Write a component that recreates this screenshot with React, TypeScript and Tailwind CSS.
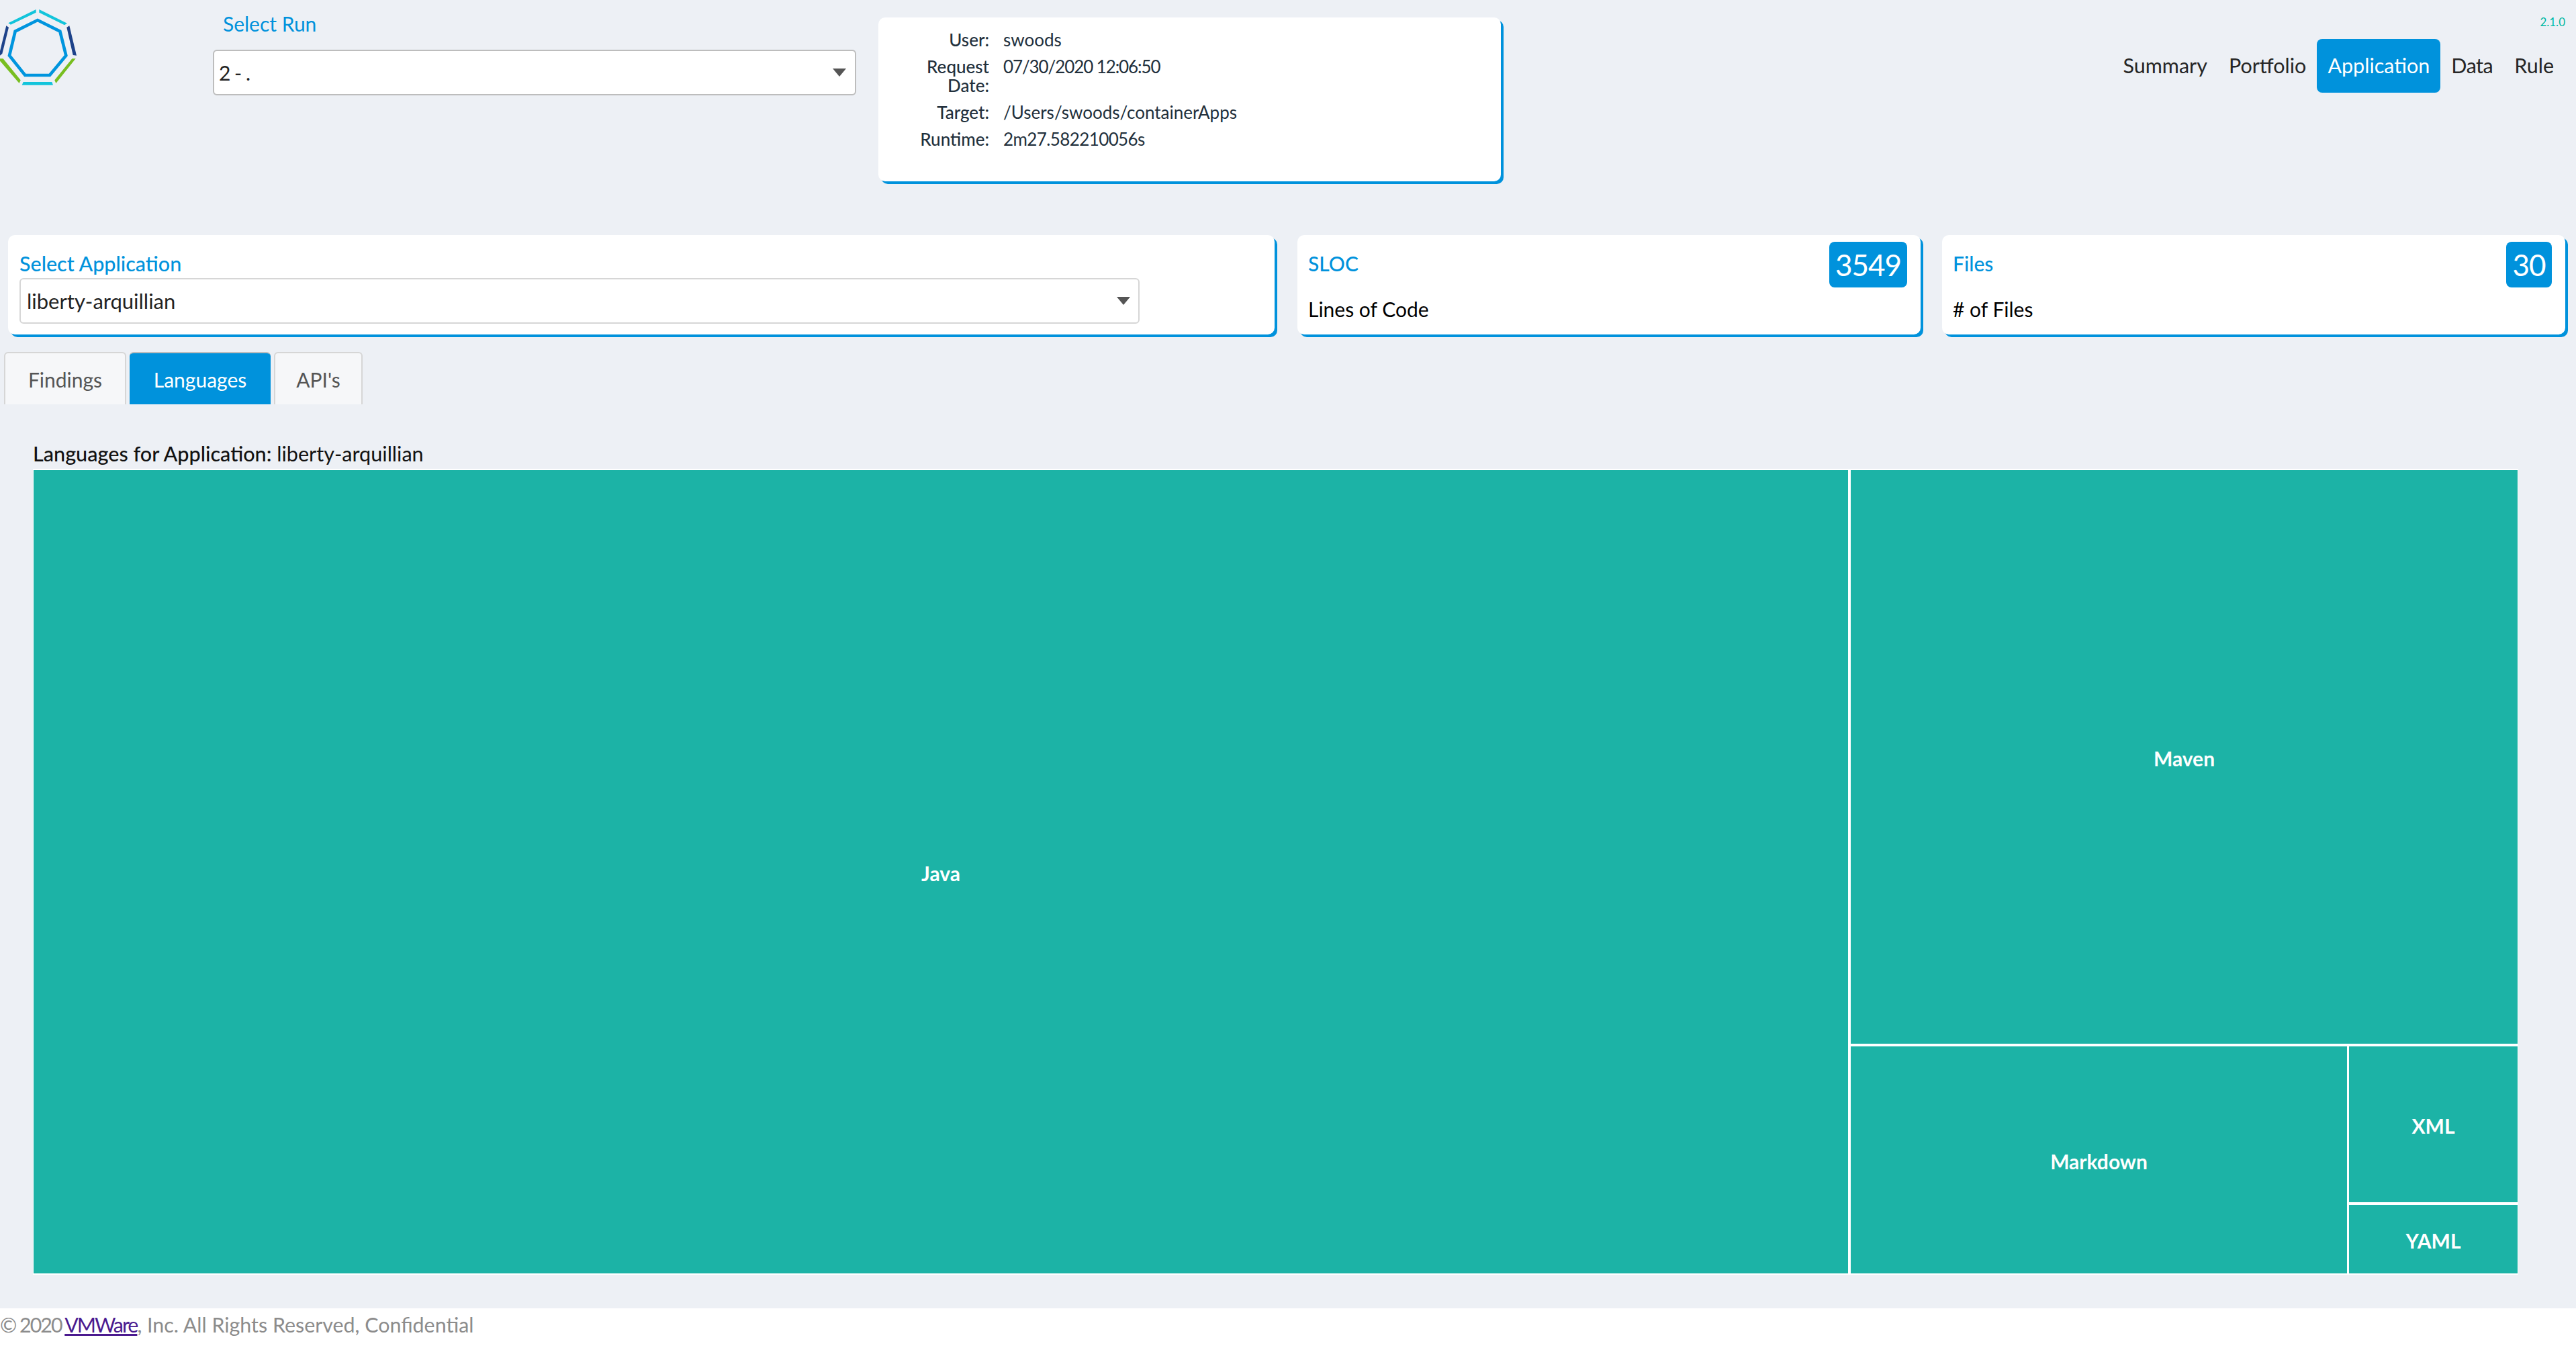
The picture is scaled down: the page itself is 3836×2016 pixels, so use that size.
const FONT = "font-['Lato','Noto_Sans',sans-serif]";

function Logo() {
  return (
    <svg viewBox="0 0 420 420" className="h-[140px] w-[140px] shrink-0">
      <polygon
        points="168,90 268,140 295,248 222,336 112,336 42,248 68,140"
        fill="none"
        stroke="#0095de"
        strokeWidth="14"
      />
      <polygon points="161,42 161,56 48,110 37,103" fill="#13c4db" />
      <polygon points="175,42 175,56 288,112 300,104" fill="#13c4db" />
      <polygon points="310,115 298,122 326,246 342,248" fill="#1d428a" />
      <polygon points="28,115 39,122 10,240 0,248 0,228" fill="#1d428a" />
      <polygon points="322,262 338,262 250,372 244,358" fill="#78be20" />
      <polygon points="0,262 14,262 92,358 86,372 0,272" fill="#78be20" />
      <polygon points="104,366 232,366 237,380 98,380" fill="#13c4db" />
    </svg>
  );
}

function Caret() {
  return (
    <svg viewBox="0 0 20 12" className="h-[12px] w-[20px]">
      <polygon points="0,0 20,0 10,12" fill="#555555" />
    </svg>
  );
}

function InfoRow({ label, value, valueClass }: { label: string; value: string; valueClass?: string }) {
  return (
    <div className="flex">
      <div className="ml-[55px] w-[110px] shrink-0 text-right font-medium">{label}</div>
      <div className={`ml-[21px] ${valueClass ?? ""}`}>{value}</div>
    </div>
  );
}

function StatCard({
  title,
  value,
  caption,
  badgeClass,
}: {
  title: string;
  value: string;
  caption: string;
  badgeClass: string;
}) {
  return (
    <div className="relative h-[148px] w-[928px] rounded-[10px] bg-white pl-[16px] pt-[29px] shadow-[4px_4px_0_#0092dc]">
      <div className="text-[30px] leading-[26px] font-medium text-[#0092dc]">{title}</div>
      <div className="mt-[35px] text-[30px] leading-[40px] text-black">{caption}</div>
      <div
        className={`absolute top-[10px] flex h-[68px] items-center justify-center rounded-[8px] bg-[#0092dc] text-[44px] tracking-[-1px] text-white ${badgeClass}`}
      >
        {value}
      </div>
    </div>
  );
}

function Cell({ label, className }: { label: string; className: string }) {
  return (
    <div className={`flex items-center justify-center bg-[#1cb3a6] pt-[4px] text-[30px] font-bold text-white ${className}`}>
      {label}
    </div>
  );
}

export default function App() {
  return (
    <div className={`flex h-screen w-full flex-col overflow-hidden bg-[#edf0f5] ${FONT}`}>
      <header className="flex h-[350px] shrink-0 items-start">
        <Logo />
        <div className="ml-[177px] w-[958px] pt-[16px]">
          <div className="pl-[15px] text-[30px] leading-[38px] text-[#0092dc]">Select Run</div>
          <div className="mt-[20px] flex h-[68px] items-center justify-between rounded-[6px] border-2 border-[#bdbdbd] bg-white pl-[7px] pr-[13px] text-[30px] text-[#222222]">
            <span className="tracking-[-1px]">2 - .</span>
            <Caret />
          </div>
        </div>
        <div className="ml-[33px] mt-[26px] h-[244px] w-[927px] rounded-[10px] bg-white pt-[19px] text-[26px] leading-[28px] text-[#22303c] shadow-[4px_4px_0_#0092dc]">
          <div className="flex flex-col gap-[12px]">
            <InfoRow label="User:" value="swoods" />
            <InfoRow label="Request Date:" value="07/30/2020 12:06:50" valueClass="tracking-[-1.1px]" />
            <InfoRow label="Target:" value="/Users/swoods/containerApps" />
            <InfoRow label="Runtime:" value="2m27.582210056s" valueClass="tracking-[-0.6px]" />
          </div>
        </div>
        <div className="ml-auto flex flex-col items-end pr-[16px] pt-[24px]">
          <div className="text-[17px] leading-[18px] text-[#00b8a3]">2.1.0</div>
          <nav className="mr-[1px] mt-[16px] flex h-[80px] items-center text-[30.5px] text-[#262626]">
            <span className="px-[16px]">Summary</span>
            <span className="px-[16px]">Portfolio</span>
            <span className="flex h-[80px] items-center rounded-[8px] bg-[#0092dc] px-[16px] text-white">Application</span>
            <span className="px-[16px] tracking-[-0.5px]">Data</span>
            <span className="px-[16px]">Rule</span>
          </nav>
        </div>
      </header>

      <section className="flex shrink-0 gap-[32px] pl-[12px]">
        <div className="mr-[2px] h-[148px] w-[1886px] rounded-[10px] bg-white pl-[17px] pt-[29px] shadow-[4px_4px_0_#0092dc]">
          <div className="text-[30.5px] leading-[26px] font-medium text-[#0092dc]">Select Application</div>
          <div className="mt-[9px] flex h-[68px] w-[1668px] items-center justify-between rounded-[6px] border-2 border-[#d6d6d6] bg-white pl-[9px] pr-[12px] text-[31px] text-[#222222]">
            <span>liberty-arquillian</span>
            <Caret />
          </div>
        </div>
        <StatCard title="SLOC" value="3549" caption="Lines of Code" badgeClass="right-[20px] w-[116px]" />
        <StatCard title="Files" value="30" caption="# of Files" badgeClass="right-[20px] w-[68px]" />
      </section>

      <div className="mt-[26px] flex h-[78px] shrink-0 gap-[5px] pl-[6px] text-[30px]">
        <div className="flex w-[182px] items-center justify-center rounded-t-[6px] border-2 border-b-0 border-[#d6d6d6] bg-[#f6f7f9] pt-[2px] text-[#555555]">Findings</div>
        <div className="flex w-[210px] items-center justify-center rounded-t-[6px] border-t-2 border-[#bdbdbd] bg-[#0092dc] pt-[2px] text-white">Languages</div>
        <div className="flex w-[132px] items-center justify-center rounded-t-[6px] border-2 border-b-0 border-[#d6d6d6] bg-[#f6f7f9] pt-[2px] text-[#555555]">API's</div>
      </div>

      <div className="ml-[49px] mb-[3px] mt-[55px] shrink-0 text-[30.6px] leading-[38px] text-[#111111]">
        <span className="font-medium">Languages for Application:</span> liberty-arquillian
      </div>

      <div className="ml-[49px] flex h-[1200px] w-[3701px] shrink-0 gap-[4px] bg-white px-[1px] py-[2px]">
        <Cell label="Java" className="w-[2702px] shrink-0" />
        <div className="flex flex-1 flex-col gap-[4px]">
          <Cell label="Maven" className="h-[854px]" />
          <div className="flex flex-1 gap-[3px]">
            <Cell label="Markdown" className="w-[739px]" />
            <div className="flex flex-1 flex-col gap-[4px]">
              <Cell label="XML" className="h-[232px]" />
              <Cell label="YAML" className="flex-1" />
            </div>
          </div>
        </div>
      </div>

      <footer className="mt-auto flex h-[68px] shrink-0 items-center bg-white pb-[18px] text-[30.4px] text-[#8c8c8c]">
        <span>
          <span className="tracking-[-2px]">© 2020 </span>
          <a className="tracking-[-2px] text-[#4b1a8f] underline">VMWare</a>, Inc. All Rights Reserved, Confidential
        </span>
      </footer>
    </div>
  );
}
